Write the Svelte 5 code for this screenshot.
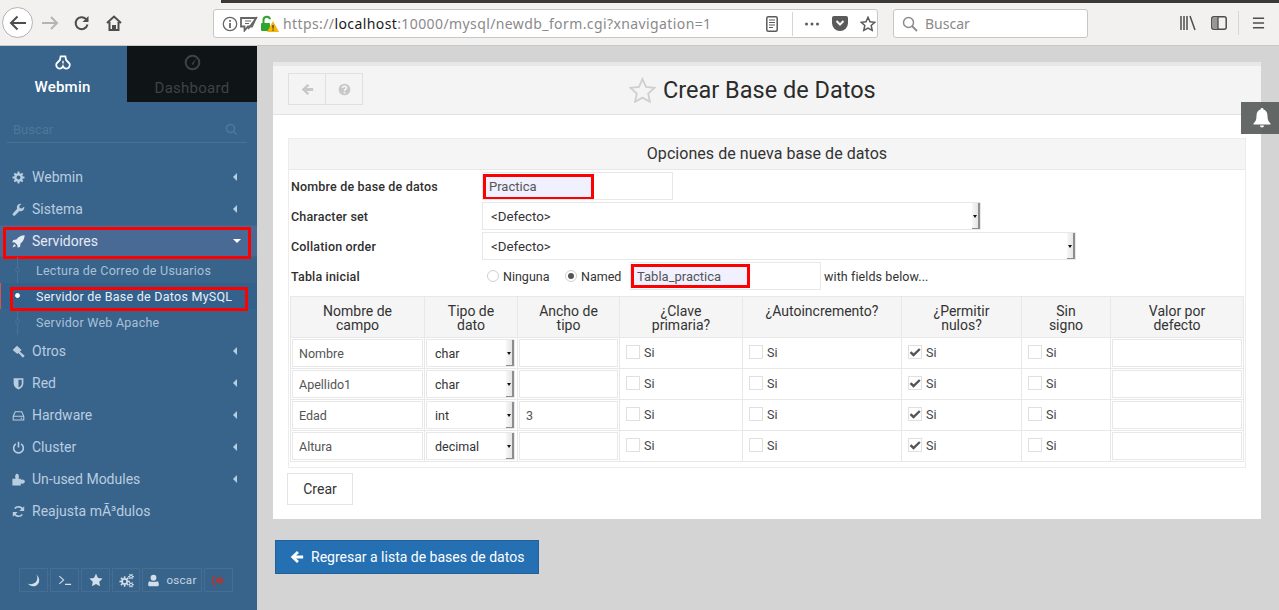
<script>
  function gear(cx, cy, r1, r2, n, hole) {
    let d = '';
    const step = (Math.PI * 2) / n;
    for (let i = 0; i < n; i++) {
      const a = i * step;
      const pts = [[r1, -0.3], [r2, -0.17], [r2, 0.17], [r1, 0.3]];
      for (const [r, o] of pts) {
        const t = a + o * step * 1.1;
        d += (d ? 'L' : 'M') + (cx + r * Math.cos(t)).toFixed(2) + ' ' + (cy + r * Math.sin(t)).toFixed(2);
      }
    }
    d += `Z M${cx + hole} ${cy} a${hole} ${hole} 0 1 0 ${-2 * hole} 0 a${hole} ${hole} 0 1 0 ${2 * hole} 0Z`;
    return d;
  }
  const icons = {
    gear: { d: gear(8, 8, 5.4, 7.4, 8, 2.4) },
    wrench: { d: 'M15 4.6a4.4 4.4 0 0 1-5.8 5.2L4 15a1.8 1.8 0 0 1-2.9-2.2L6.3 7A4.4 4.4 0 0 1 11.5 1.2L8.9 3.7l.6 2.5 2.4.7z' },
    rocket: { d: 'M15.6.4C11 .6 7.8 2.4 5.4 5.6L1.6 6 .2 9l3.2.3 3.3 3.3.3 3.2 3-1.4.4-3.8C13.6 8.2 15.4 5 15.6.4zM2.6 11L.6 15.4 5 13.4z' },
    gavel: { d: 'M.8 6L6 .8 11.8 6 6.600 11.200zM8.800 7.400L15.600 13.300 13.400 15.600 7.200 9z', rule: 'nonzero' },
    shield: { d: 'M2 1.5H14V8c0 3.5-3 6-6 7.500C5 14 2 11.500 2 8zM8 3.500V13c2-1 4-2.800 4-5V3.500z', rule: 'evenodd' },
    hdd: { s: 'M1.5 9L4 3.500h8L14.500 9v4.500h-13zM1.500 9h13M10.500 11.300h2', w: 1.3 },
    power: { s: 'M4.8 3.600a6 6 0 1 0 6.400 0M8 1v7', w: 2 },
    puzzle: { d: 'M.5 7H4.300C3.200 3.200 4.600 1 6.200 1S9.200 3.200 8.100 7H10.800V8.500C12.800 7.200 15.800 8 15.800 10.500S12.800 13.800 10.800 12.500V15.500H.5z' },
    refresh: { s: 'M13.5 6.200A5.800 5.800 0 0 0 3.400 4.400M2.500 9.800a5.800 5.800 0 0 0 10.100 1.800', w: 2.1, d: 'M15 1.500V7.500H9zM1 14.500V8.500H7z' },
    moon: { d: 'M10.500 1.500C13.500 6 11.500 12.500 4.500 12.800 3 12.900 1.800 12.500 1 12c2 3 6 4 9.300 2.500C15 12.500 15.300 5.500 10.500 1.500z' },
    terminal: { s: 'M1.500 3.500L6.500 8l-5 4.500M8 13h7', w: 1.2 },
    star: { d: 'M8 .8l2.300 4.800 5.200.7-3.800 3.600.9 5.200L8 12.600l-4.600 2.500.9-5.200L.5 6.300l5.200-.7z' },
    cogs: { d: gear(6, 9, 3.6, 5.6, 8, 1.8) + gear(12.8, 3.8, 1.9, 3.1, 6, 1) + gear(12.8, 12.5, 1.9, 3.1, 6, 1), rule: 'evenodd' },
    user: { d: 'M8 1a3.500 3.500 0 1 1 0 7.200A3.500 3.500 0 0 1 8 1zM3 9c1.500 1 8.500 1 10 0 1 .6 1.500 2 1.500 4.500 0 1-1 1.500-2 1.500h-9c-1 0-2-.5-2-1.500C1.500 11 2 9.600 3 9z' },
    logout: { d: 'M9 2.800L15.800 8 9 13.200V10.400H5V5.600H9zM.8 2.200H5V4H2.600V12H5V13.800H.8z' },
    left: { d: 'M8 1.200L10.200 3.400 7 6.200H15V9.800H7L10.200 12.600 8 14.800 .8 8z' },
    help: { d: 'M8 .8a7.200 7.200 0 1 1 0 14.400A7.200 7.200 0 0 1 8 .8zM7 11v2h2v-2zM8 3C5.900 3 4.800 4.100 4.600 5.700l2 .3C6.800 5.200 7.200 4.900 8 4.900c.9 0 1.300.4 1.300 1 0 1.300-2.400 1.300-2.300 4h2c0-1.900 2.400-2 2.400-4.100C11.400 4.100 10 3 8 3z', rule: 'evenodd' },
    search: { s: 'M6.8 1.800a5 5 0 1 1 0 10 5 5 0 0 1 0-10zM10.500 10.500L14.500 14.500', w: 2 }
  };

  const menu = [
    { label: 'Webmin', icon: 'gear', size: 13 },
    { label: 'Sistema', icon: 'wrench', size: 13 },
    {
      label: 'Servidores', icon: 'rocket', size: 13, open: true,
      sub: [
        { label: 'Lectura de Correo de Usuarios' },
        { label: 'Servidor de Base de Datos MySQL', active: true },
        { label: 'Servidor Web Apache' }
      ]
    },
    { label: 'Otros', icon: 'gavel', size: 13 },
    { label: 'Red', icon: 'shield', size: 13 },
    { label: 'Hardware', icon: 'hdd', size: 13 },
    { label: 'Cluster', icon: 'power', size: 13 },
    { label: 'Un-used Modules', icon: 'puzzle', size: 13 },
    { label: 'Reajusta mÃ³dulos', icon: 'refresh', size: 13, leaf: true }
  ];
  const headers = [
    ['Nombre de', 'campo'], ['Tipo de', 'dato'], ['Ancho de', 'tipo'], ['¿Clave', 'primaria?'],
    ['¿Autoincremento?'], ['¿Permitir', 'nulos?'], ['Sin', 'signo'], ['Valor por', 'defecto']
  ];
  const rows = [
    { name: 'Nombre', type: 'char', width: '' },
    { name: 'Apellido1', type: 'char', width: '' },
    { name: 'Edad', type: 'int', width: '3' },
    { name: 'Altura', type: 'decimal', width: '' }
  ];
</script>

{#snippet icon(name, size = 14, cls = '')}
  {@const i = icons[name]}
  <svg class="ic {cls}" width={size} height={size} viewBox="0 0 16 16" aria-hidden="true">
    {#if i.d}<path d={i.d} fill="currentColor" fill-rule={i.rule || 'evenodd'} />{/if}
    {#if i.s}<path d={i.s} fill="none" stroke="currentColor" stroke-width={i.w} />{/if}
  </svg>
{/snippet}

{#snippet select(text, cls)}
  <div class="select {cls}"><span>{text}</span><i class="spin"></i></div>
{/snippet}

{#snippet check(on)}
  <label class="chk">
    <span class="box">
      {#if on}<svg width="12" height="12" viewBox="0 0 12 12"><path d="M1.500 6.200L4.500 9 10.800 3" fill="none" stroke="#555" stroke-width="2.400" /></svg>{/if}
    </span>Si
  </label>
{/snippet}

<div class="page">
  <header class="toolbar">
    <div class="strip"></div>
    <button class="tb back" aria-label="Atrás">
      <svg width="20" height="20" viewBox="0 0 20 20"><path d="M18 10H3M9.500 3.500L3 10l6.500 6.500" fill="none" stroke="#4d4d4d" stroke-width="2" /></svg>
    </button>
    <span class="tb fwd"><svg width="18" height="18" viewBox="0 0 18 18"><path d="M1 9h15M10 3l6 6-6 6" fill="none" stroke="#b4b4b4" stroke-width="2" /></svg></span>
    <span class="tb reload"><svg width="16" height="16" viewBox="0 0 16 16"><path d="M13.500 9.500A6 6 0 1 1 12 4" fill="none" stroke="#4d4d4d" stroke-width="2" /><path d="M14.500 1v6h-6z" fill="#4d4d4d" /></svg></span>
    <span class="tb home"><svg width="16" height="16" viewBox="0 0 16 16"><path d="M1 8L8 1.500 15 8M3.500 7v8H7v-4h2v4h3.500V7" fill="none" stroke="#4d4d4d" stroke-width="2" /></svg></span>

    <div class="url">
      <svg class="u1" width="16" height="16" viewBox="0 0 16 16"><circle cx="8" cy="8" r="6.700" fill="none" stroke="#666" stroke-width="1.300" /><path d="M8 7v5M8 4v1.800" stroke="#666" stroke-width="1.800" /></svg>
      <svg class="u2" width="18" height="16" viewBox="0 0 18 16"><path d="M1 2h15l-4 8.500H8L4.500 14.500V10.500H1z" fill="none" stroke="#666" stroke-width="1.800" /><path d="M5 5h6M5 7.500h4" stroke="#666" /><path d="M8 13L17 1" stroke="#666" stroke-width="1.600" /></svg>
      <svg class="u3" width="19" height="18" viewBox="0 0 19 18"><path d="M3.500 8V5a3.300 3.300 0 0 1 6.500-.8" fill="none" stroke="#2fa52f" stroke-width="2" /><rect x="1" y="8" width="9" height="8" rx="1" fill="#2fa52f" /><path d="M13 6l6 11H7z" fill="#f5b60b" /><path d="M13 10v3.500M13 14.500v1.300" stroke="#333" stroke-width="1.200" /></svg>
      <span class="addr">https://<b>localhost</b>:10000/mysql/newdb_form.cgi?xnavigation=1</span>
      <svg class="u4" width="12" height="16" viewBox="0 0 12 16"><rect x=".8" y=".8" width="10.400" height="14.400" rx="1.500" fill="none" stroke="#5a5a5a" stroke-width="1.500" /><path d="M3 4h6M3 6.500h6M3 9h6M3 11.500h4" stroke="#5a5a5a" /></svg>
      <i class="sep"></i>
      <svg class="u5" width="16" height="4" viewBox="0 0 16 4"><circle cx="2.500" cy="2" r="1.500" fill="#5a5a5a" /><circle cx="8" cy="2" r="1.500" fill="#5a5a5a" /><circle cx="13.500" cy="2" r="1.500" fill="#5a5a5a" /></svg>
      <svg class="u6" width="16" height="15" viewBox="0 0 16 15"><path d="M2 0h12a2 2 0 0 1 2 2v5a8 8 0 0 1-16 0V2a2 2 0 0 1 2-2z" fill="#5a5a5a" /><path d="M4.500 5L8 8.500 11.500 5" fill="none" stroke="#f7f7f7" stroke-width="2" /></svg>
      <svg class="u7" width="16" height="16" viewBox="0 0 16 16"><path d="M8 1.300l2 4.500 4.800.5-3.600 3.200 1 4.800L8 12l-4.200 2.300 1-4.800L1.200 6.300 6 5.800z" fill="none" stroke="#5a5a5a" stroke-width="1.500" /></svg>
    </div>

    <div class="find">
      <svg width="16" height="16" viewBox="0 0 16 16"><circle cx="6.500" cy="6.500" r="5" fill="none" stroke="#8c8c8c" stroke-width="1.500" /><path d="M10 10l5 5" stroke="#8c8c8c" stroke-width="1.800" /></svg>
      <span>Buscar</span>
    </div>

    <svg class="r1" width="16" height="16" viewBox="0 0 16 16"><path d="M1 1v14M4 1v14M7 1v14M10 1l5 14" stroke="#4d4d4d" stroke-width="1.500" fill="none" /></svg>
    <svg class="r2" width="16" height="16" viewBox="0 0 16 16"><rect x=".8" y="1.800" width="14.400" height="12.400" rx="2" fill="none" stroke="#4d4d4d" stroke-width="1.500" /><rect x="2" y="3" width="5" height="10" fill="#4d4d4d" opacity=".55" /><path d="M7 2v12" stroke="#4d4d4d" stroke-width="1.300" /></svg>
    <i class="sep r3"></i>
    <svg class="r4" width="13" height="14" viewBox="0 0 14 14"><path d="M1 2h12M1 7h12M1 12h12" stroke="#4d4d4d" stroke-width="1.600" /></svg>
  </header>

  <div class="body">
    <aside class="side">
      <div class="tabs">
        <div class="tab on">
          <svg width="16" height="16" viewBox="0 0 17 17"><path d="M6 1.500h5l.8 3.800 3.600 3.800c1 2.500-.8 5.400-3.400 5.400-1.500 0-3-1.200-3.500-2.500-.5 1.300-2 2.500-3.500 2.500-2.600 0-4.400-2.900-3.400-5.400l3.600-3.800z" fill="none" stroke="#fff" stroke-width="1.900" /><path d="M8.500 6v3" stroke="#fff" stroke-width="1.500" /></svg>
          <span>Webmin</span>
        </div>
        <div class="tab dark">
          <svg width="17" height="17" viewBox="0 0 17 17"><circle cx="8.500" cy="8.500" r="6.800" fill="none" stroke="#3e4346" stroke-width="2" /><path d="M7.500 10L12 4.500l-2.800 6.500z" fill="#3e4346" /></svg>
          <span>Dashboard</span>
        </div>
      </div>

      <div class="search">
        <span>Buscar</span>
        {@render icon('search', 13)}
      </div>

      <nav class="menu">
        {#each menu as m}
          <div class="item" class:open={m.open}>
            {@render icon(m.icon, m.size, 'mi')}
            <span class="lbl">{m.label}</span>
            {#if !m.leaf}<i class="caret" class:down={m.open}></i>{/if}
            {#if m.open}<b class="mark mark-item"></b>{/if}
          </div>
          {#if m.sub}
            <div class="subs">
              {#each m.sub as s}
                <div class="sub" class:active={s.active}>
                  <i class="dot"></i><span>{s.label}</span>
                  {#if s.active}<b class="mark mark-sub"></b>{/if}
                </div>
              {/each}
            </div>
          {/if}
        {/each}
      </nav>

      <div class="foot">
        <span class="fb">{@render icon('moon', 14)}</span>
        <span class="fb">{@render icon('terminal', 14)}</span>
        <span class="fb">{@render icon('star', 14)}</span>
        <span class="fb">{@render icon('cogs', 15)}</span>
        <span class="fb user">{@render icon('user', 13)}<em>oscar</em></span>
        <span class="fb out">{@render icon('logout', 13)}</span>
      </div>
    </aside>

    <main class="main">
      <section class="panel">
        <div class="head">
          <div class="btns">
            <span>{@render icon('left', 13)}</span>
            <span>{@render icon('help', 13)}</span>
          </div>
          <h1>
            <svg width="27" height="26" viewBox="0 0 27 26"><path d="M13.500 2l3.500 7.800 8.500 1-6.300 5.700 1.700 8.300-7.400-4.200-7.400 4.200 1.700-8.300-6.300-5.700 8.500-1z" fill="none" stroke="#cfcfcf" stroke-width="1.800" /></svg>
            Crear Base de Datos
          </h1>
        </div>

        <div class="content">
          <div class="opts">
            <h2>Opciones de nueva base de datos</h2>
            <div class="frow">
              <label>Nombre de base de datos</label>
              <div class="hold w191">
                <b class="mark mark-name"></b>
                <input class="inp" value="Practica" />
              </div>
            </div>
            <div class="frow">
              <label>Character set</label>
              {@render select('<Defecto>', 'wide')}
            </div>
            <div class="frow">
              <label>Collation order</label>
              {@render select('<Defecto>', 'wide2')}
            </div>
            <div class="frow">
              <label>Tabla inicial</label>
              <div class="radios">
                <span class="radio"></span><span class="rt1">Ninguna</span>
                <span class="radio on"></span><span class="rt2">Named</span>
                <div class="hold w191">
                  <b class="mark mark-table"></b>
                  <input class="inp" value="Tabla_practica" />
                </div>
                <span class="below">with fields below...</span>
              </div>
            </div>

            <table class="fields">
              <thead>
                <tr>
                  {#each headers as h}
                    <th>{#each h as l, i}{#if i}<br />{/if}{l}{/each}</th>
                  {/each}
                </tr>
              </thead>
              <tbody>
                {#each rows as r}
                  <tr>
                    <td><input class="cell" value={r.name} /></td>
                    <td>{@render select(r.type, 'small')}</td>
                    <td><input class="cell" value={r.width} /></td>
                    <td class="c">{@render check(false)}</td>
                    <td class="c">{@render check(false)}</td>
                    <td class="c">{@render check(true)}</td>
                    <td class="c">{@render check(false)}</td>
                    <td><input class="cell" value="" /></td>
                  </tr>
                {/each}
              </tbody>
            </table>
          </div>
          <button class="crear">Crear</button>
        </div>
      </section>

      <button class="return">{@render icon('left', 14)}<span>Regresar a lista de bases de datos</span></button>

      <div class="bell">
        <svg width="18" height="20" viewBox="0 0 18 20"><path d="M9 0c1 0 1.500.7 1.500 1.500C13 2 14.500 4.500 14.500 8c0 4 1 5.500 3 7.500v1H.5v-1c2-2 3-3.500 3-7.500 0-3.500 1.500-6 4-6.500C7.500.7 8 0 9 0zM7 17.500h4a2 2 0 0 1-4 0z" fill="#fff" /></svg>
      </div>
    </main>
  </div>
</div>

<style>
  :global(body) { margin: 0; font-family: Roboto, "Liberation Sans", sans-serif; color: #333; }
  * { box-sizing: border-box; }
  .page { width: 1279px; height: 610px; overflow: hidden; display: flex; flex-direction: column; position: relative; }
  .ic { display: block; flex: none; }

  /* browser chrome */
  .toolbar { height: 46px; flex: none; background: #f2f1ef; border-bottom: 1px solid #c9c9c9; display: flex; align-items: center; position: relative; font-family: "Noto Sans", sans-serif; }
  .strip { position: absolute; left: 221px; right: 0; top: 0; height: 3px; background: #3b3935; }
  .tb { display: flex; align-items: center; justify-content: center; flex: none; }
  .back { width: 31px; height: 31px; margin-left: 2px; border-radius: 50%; background: #fff; border: 1px solid #b3b3b3; padding: 0; }
  .fwd { margin-left: 8px; width: 18px; }
  .reload { margin-left: 15px; width: 16px; }
  .home { margin-left: 16px; width: 16px; margin-right: 91px; }
  .url { width: 665px; height: 29px; background: #fff; border: 1px solid #c6c6c6; border-radius: 3px; display: flex; align-items: center; flex: none; margin-top: 2px; }
  .u1 { margin-left: 8px; flex: none; }
  .u2 { margin-left: 2px; flex: none; }
  .u3 { margin-left: 2px; flex: none; }
  .addr { margin-left: 4px; font-size: 14px; color: #8a8a8a; white-space: nowrap; width: 471px; letter-spacing: .4px; flex: none; }
  .addr b { font-weight: 400; color: #1a1a1a; }
  .u4 { margin-left: 12px; flex: none; }
  .sep { display: block; width: 1px; height: 24px; background: #d5d5d5; flex: none; }
  .url .sep { margin-left: 14px; }
  .u5 { margin-left: 11px; flex: none; }
  .u6 { margin-left: 12px; flex: none; }
  .u7 { margin-left: 12px; flex: none; }
  .find { width: 195px; height: 29px; margin-left: 15px; margin-top: 2px; background: #fff; border: 1px solid #c6c6c6; border-radius: 3px; display: flex; align-items: center; padding-left: 8px; gap: 7px; font-size: 14px; color: #8a8a8a; flex: none; }
  .r1 { margin-left: 92px; flex: none; }
  .r2 { margin-left: 15px; flex: none; }
  .r3 { margin-left: 11px; }
  .r4 { margin-left: 13px; flex: none; }

  .body { flex: 1; display: flex; min-height: 0; }

  /* sidebar */
  .side { width: 257px; flex: none; background: #38638a; display: flex; flex-direction: column; }
  .tabs { display: flex; height: 56px; flex: none; }
  .tab { display: flex; flex-direction: column; align-items: center; gap: 7px; padding-top: 9px; font-size: 15px; font-weight: 500; letter-spacing: .25px; }
  .tab.on { width: 127px; color: #fff; padding-right: 2px; }
  .tab.dark { width: 130px; background: #0f1417; color: #3e4346; font-weight: 400; padding-top: 8px; gap: 8px; }
  .search { margin: 14px 10px 0 7px; height: 27px; border-bottom: 1px solid #4a7297; display: flex; justify-content: space-between; align-items: center; padding: 0 9px 0 6px; font-size: 13px; color: #4f769b; }
  .menu { margin-top: 18px; }
  .item { height: 32px; display: flex; align-items: center; color: #b8cde0; font-size: 14px; position: relative; padding-left: 12px; }
  .item.open { background: #4a6a96; color: #e3ebf3; height: 30px; margin: 1px 0; box-shadow: 0 -1px 0 #3f678f, 0 1px 0 #3f678f; }
  .lbl { margin-left: 7px; }
  .caret { position: absolute; left: 233px; top: 50%; margin-top: -4px; border: 4px solid transparent; border-left-width: 0; border-right: 4px solid #b8cde0; }
  .caret.down { left: 233px; margin-top: -2px; border: 4px solid transparent; border-bottom-width: 0; border-top: 4px solid #fff; }
  .subs { position: relative; }
  .subs::before { content: ''; position: absolute; left: 17px; top: 0; bottom: 0; width: 1px; background: #4a7297; }
  .sub { height: 26px; display: flex; align-items: center; padding-left: 36px; font-size: 12.5px; color: #a9c1d8; position: relative; letter-spacing: .25px; white-space: nowrap; }
  .sub .dot { position: absolute; left: 15px; top: 10px; width: 5px; height: 5px; border-radius: 50%; border: 1px solid #4a7297; background: #38638a; }
  .sub.active { background: #34608c; color: #e9f0f6; box-shadow: inset 1px 0 0 #d9534f; }
  .sub.active .dot { background: #fff; border-color: #fff; }
  .foot { margin-top: 41px; margin-left: 19px; display: flex; gap: 2px; }
  .fb { width: 29px; height: 24px; border: 1px solid #456e94; display: flex; align-items: center; justify-content: center; color: #d2dfea; }
  .fb:nth-child(4) { width: 28px; }
  .user { width: 60px; gap: 6px; }
  .user em { font-style: normal; font-size: 11.5px; letter-spacing: .3px; color: #c6d6e4; }
  .out { color: #a33b3b; }

  .mark { position: absolute; border: 3px solid #f00; display: block; pointer-events: none; }
  .mark-item { left: 3px; top: 1px; width: 248px; height: 32px; }
  .mark-sub { left: 10px; top: 4px; width: 238px; height: 24px; }
  .mark-name { left: 1px; top: 2px; width: 111px; height: 26px; background: #f0f0ff; }
  .mark-table { left: 1px; top: 2px; width: 119px; height: 24px; background: #f0f0ff; }

  /* main */
  .main { flex: 1; background: #d4d4d4; position: relative; padding: 16px 18px 0 16px; min-width: 0; }
  .panel { height: 457px; background: #fff; border-top: 4px solid #e7e7e7; }
  .head { height: 49px; background: #f4f4f4; border-bottom: 1px solid #e2e2e2; display: flex; align-items: flex-start; padding: 7px 0 0 15px; }
  .btns { display: flex; }
  .btns span { width: 38px; height: 32px; border: 1px solid #e0e0e0; display: flex; align-items: center; justify-content: center; color: #c8c8c8; }
  .btns span + span { margin-left: -1px; }
  h1 { margin: 3px 0 0 266px; font-size: 23.5px; font-weight: 400; color: #2b2b2b; display: flex; align-items: center; gap: 7px; line-height: 28px; white-space: nowrap; }
  .content { padding: 23px 14px 0 15px; }
  .opts { width: 958px; height: 330px; border: 1px solid #ececec; padding: 0 0 0 1px; }
  h2 { margin: 0 0 0 -1px; height: 31px; background: #f5f5f5; border-bottom: 1px solid #e8e8e8; font-size: 16px; letter-spacing: .05px; font-weight: 400; text-align: center; line-height: 30px; color: #333; }
  .frow { height: 30px; display: flex; align-items: center; padding-top: 2px; }
  .frow > label { width: 192px; flex: none; padding-left: 1px; font-size: 12.5px; letter-spacing: .17px; font-weight: 500; color: #2f2f2f; }
  .hold { position: relative; height: 28px; flex: none; }
  .w191 { width: 191px; }
  .inp { position: relative; width: 100%; height: 100%; background: transparent; border: 1px solid #e8e8e8; padding: 0 6px; font: 13px Roboto, sans-serif; color: #555; outline: 0; }
  .select { height: 28px; border: 1px solid #e8e8e8; background: #fff; display: flex; align-items: center; padding-left: 8px; font-size: 13.3px; color: #333; position: relative; flex: none; }
  .wide { width: 499px; }
  .wide2 { width: 594px; }
  .small { width: 89px; padding-left: 8px; height: 28px; font-size: 12.5px; }
  .spin { position: absolute; right: 0; top: 0; bottom: 0; width: 8px; background: linear-gradient(90deg, #f7f7f7, #e6e6e6); border-right: 2px solid #8d8d8d; border-bottom: 1px solid #8d8d8d; }
  .spin::after { content: ''; position: absolute; left: 1px; top: 12px; border: 2.5px solid transparent; border-bottom-width: 0; border-top: 3px solid #111; }
  .radios { display: flex; align-items: center; font-size: 12.5px; padding-left: 5px; color: #333; }
  .radio { width: 12px; height: 12px; border-radius: 50%; border: 1px solid #cfcfcf; background: #fff; position: relative; flex: none; }
  .radio.on::after { content: ''; position: absolute; left: 2px; top: 2px; width: 6px; height: 6px; border-radius: 50%; background: #555; }
  .rt1 { margin-left: 4px; width: 62px; }
  .rt2 { margin-left: 4px; width: 49px; }
  .below { margin-left: 3px; white-space: nowrap; letter-spacing: .1px; }

  .fields { border-collapse: collapse; table-layout: fixed; width: 954px; margin: 6px 0 0 0; }
  .fields th { height: 41px; background: #f5f5f5; border: 1px solid #e8e8e8; font-size: 14px; font-weight: 400; line-height: 14px; color: #333; vertical-align: top; padding: 7px 0 0; }
  .fields th:nth-child(1) { width: 134px; }
  .fields th:nth-child(2) { width: 93px; }
  .fields th:nth-child(3) { width: 102px; }
  .fields th:nth-child(4) { width: 123px; }
  .fields th:nth-child(5) { width: 159px; }
  .fields th:nth-child(6) { width: 120px; }
  .fields th:nth-child(7) { width: 89px; }
  .fields td { height: 31px; border: 1px solid #e8e8e8; padding: 1px 1px; }
  .cell { display: block; width: 100%; height: 28px; border: 1px solid #e8e8e8; padding: 0 6px; font: 12.5px Roboto, sans-serif; color: #555; outline: 0; }
  .c { padding-left: 6px !important; }
  .chk { display: flex; align-items: center; gap: 4px; font-size: 12.5px; color: #444; margin-top: -2px; }
  .box { width: 14px; height: 14px; border: 1px solid #e0e0e0; background: #fff; display: flex; align-items: center; justify-content: center; flex: none; }
  .crear { display: block; margin: 5px 0 0 -1px; width: 66px; height: 32px; background: #fff; border: 1px solid #e4e4e4; font: 14px Roboto, sans-serif; color: #333; padding: 0; }
  .return { margin: 21px 0 0 2px; width: 264px; height: 34px; background: #2570b3; border: 1px solid #245f95; color: #fff; font: 14px Roboto, sans-serif; display: flex; align-items: center; padding: 0 0 0 14px; gap: 7px; white-space: nowrap; }
  .bell { position: absolute; right: 0; top: 56px; width: 38px; height: 32px; background: rgba(88, 92, 90, .92); display: flex; align-items: center; justify-content: center; padding-left: 4px; }
</style>
